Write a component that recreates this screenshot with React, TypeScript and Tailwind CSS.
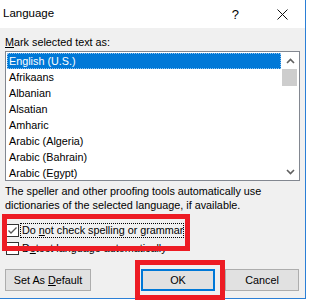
import React from "react";

const LANGUAGES = [
  "English (U.S.)",
  "Afrikaans",
  "Albanian",
  "Alsatian",
  "Amharic",
  "Arabic (Algeria)",
  "Arabic (Bahrain)",
  "Arabic (Egypt)",
];

function Chevron({ up }: { up?: boolean }) {
  return (
    <svg width="9" height="6" viewBox="0 0 9 6" className="block">
      <path
        d={up ? "M1 5 L4.5 1.5 L8 5" : "M1 1 L4.5 4.5 L8 1"}
        fill="none"
        stroke="#606060"
        strokeWidth="1.6"
      />
    </svg>
  );
}

function CheckBox({ checked }: { checked?: boolean }) {
  return (
    <span className="w-[13px] h-[13px] border border-[#333] bg-white flex items-center justify-center shrink-0">
      {checked && (
        <svg width="11" height="11" viewBox="0 0 11 11">
          <path d="M1.5 5.5 L4 8 L9.5 2.5" fill="none" stroke="#555" strokeWidth="1.3" />
        </svg>
      )}
    </span>
  );
}

export default function App() {
  return (
    <div
      className="w-[307px] h-[303px] bg-white relative overflow-hidden text-[10.8px] text-black"
      style={{ fontFamily: '"Liberation Sans", Arial, sans-serif' }}
    >
      <div className="w-[306px] h-[299px] bg-[#f0f0f0] border-r border-b border-[#2b7fd6] flex flex-col">
        {/* title bar */}
        <div className="h-[28px] bg-white flex items-center shrink-0">
          <span className="pl-[3px] text-[11.5px]">Language</span>
          <span className="ml-auto mr-[38px] text-[13px] leading-none">?</span>
          <svg width="11" height="11" viewBox="0 0 11 11" className="mr-[17px]">
            <path d="M0.5 0.5 L10.5 10.5 M10.5 0.5 L0.5 10.5" stroke="#111" strokeWidth="1" />
          </svg>
        </div>

        <div className="px-[5px] flex flex-col">
          <div className="mt-[7px] h-[14px] leading-[14px]">
            <u>M</u>ark selected text as:
          </div>

          <div className="mt-[2px] h-[130px] border border-[#828790] bg-white flex">
            <div className="flex-1 p-[1px] flex flex-col">
              {LANGUAGES.map((lang, i) => (
                <div
                  key={lang}
                  className={
                    i === 0
                      ? "h-[16px] leading-[14px] pl-[1px] bg-[#0078d7] text-white border border-dotted border-[#8fc3ef]"
                      : "h-[16px] leading-[16px] pl-[2px]"
                  }
                >
                  {lang}
                </div>
              ))}
            </div>
            <div className="w-[17px] flex flex-col">
              <div className="h-[17px] flex items-center justify-center">
                <Chevron up />
              </div>
              <div className="h-[17px] w-[15px] bg-[#cdcdcd]" />
              <div className="flex-1" />
              <div className="h-[17px] flex items-center justify-center">
                <Chevron />
              </div>
            </div>
          </div>

          <div className="mt-[3px] leading-[14px] whitespace-nowrap">
            The speller and other proofing tools automatically use
            <br />
            dictionaries of the selected language, if available.
          </div>

          <div className="mt-[11px] h-[15px] flex items-center gap-[1px] pl-[1px]">
            <CheckBox checked />
            <span className="border border-dotted border-black leading-[13px] pl-[1px]">
              Do <u>n</u>ot check spelling or grammar
            </span>
          </div>
          <div className="mt-[3px] h-[15px] flex items-center gap-[2px] pl-[1px]">
            <CheckBox />
            <span className="leading-[13px] px-[1px]">
              D<u>e</u>tect language automatically
            </span>
          </div>

          <div className="mt-[13px] flex items-center">
            <button className="w-[86px] h-[22px] bg-[#e1e1e1] border border-[#adadad]">
              Set As <u>D</u>efault
            </button>
            <button className="ml-[50px] w-[74px] h-[22px] bg-[#e1e1e1] border-2 border-[#0078d7]">
              OK
            </button>
            <button className="ml-[10px] w-[74px] h-[22px] bg-[#e1e1e1] border border-[#adadad]">
              Cancel
            </button>
          </div>
        </div>
      </div>

      {/* red annotation boxes */}
      <div className="absolute left-[2px] top-[214px] w-[188px] h-[37px] border-[5px] border-[#ed1c24]" />
      <div className="absolute left-[135px] top-[260px] w-[90px] h-[40px] border-[5px] border-[#ed1c24]" />
    </div>
  );
}
